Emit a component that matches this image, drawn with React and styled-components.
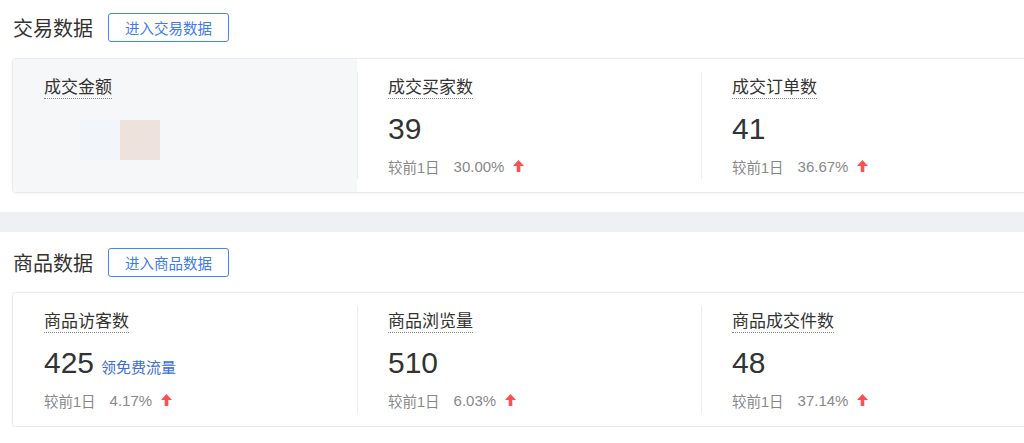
import React from "react";
import styled, { createGlobalStyle } from "styled-components";

const Global = createGlobalStyle`
  html, body { margin: 0; padding: 0; background: #fff; overflow: hidden; }
  body { font-family: "Liberation Sans", "Noto Sans CJK SC", sans-serif; color: #333; }
  * { box-sizing: border-box; }
`;

const Page = styled.div`
  width: 1024px;
  display: flex;
  flex-direction: column;
`;

const Section = styled.section`
  padding: ${(p) => p.$top}px 0 0 12px;
  display: flex;
  flex-direction: column;
  gap: ${(p) => p.$gap}px;
`;

const Header = styled.div`
  display: flex;
  align-items: center;
  gap: 15px;
  height: 29px;
`;

const Title = styled.h2`
  margin: 0;
  font-size: 20px;
  font-weight: 400;
  color: #333;
  line-height: 29px;
  padding-left: 1px;
  font-family: "Noto Sans CJK SC", sans-serif;
`;

const LinkButton = styled.button`
  height: 29px;
  padding: 0 16px;
  border: 1px solid #4a83f5;
  border-radius: 3px;
  background: #fff;
  color: #3f7af0;
  font-size: 14.5px;
  font-family: "Noto Sans CJK SC", sans-serif;
  line-height: 27px;
  cursor: pointer;
`;

const Card = styled.div`
  width: 1034px;
  display: grid;
  grid-template-columns: 344px 344px 344px;
  border: 1px solid #eaeaea;
  border-radius: 4px;
  box-shadow: 0 1px 3px rgba(0, 0, 0, 0.04);
  overflow: hidden;
`;

const Cell = styled.div`
  background: ${(p) => (p.$muted ? "#f6f7f9" : "#fff")};
  padding: 13px 0;
`;

const CellInner = styled.div`
  height: 107px;
  padding: 3px 0 0 ${(p) => (p.$divided ? 30 : 31)}px;
  border-left: ${(p) => (p.$divided ? "1px solid #ececec" : "none")};
  display: flex;
  flex-direction: column;
  align-items: flex-start;
`;

const Label = styled.span`
  display: inline-block;
  font-family: "Noto Sans CJK SC", sans-serif;
  font-size: 17px;
  line-height: 22px;
  color: #333;
  padding-bottom: 1px;
  border-bottom: 1px dotted #8a8a8a;
`;

const ValueRow = styled.div`
  margin-top: 10px;
  height: 40px;
  display: flex;
  align-items: baseline;
  gap: 7px;
`;

const Value = styled.span`
  font-family: "Liberation Sans", sans-serif;
  font-size: 30px;
  line-height: 40px;
  color: #333;
`;

const Promo = styled.a`
  font-family: "Noto Sans CJK SC", sans-serif;
  font-size: 15px;
  color: #3d6dd6;
  text-decoration: none;
`;

const Change = styled.div`
  margin-top: 7px;
  display: flex;
  align-items: center;
  height: 20px;
  color: #888;
`;

const ChangeLabel = styled.span`
  font-family: "Liberation Sans", "Noto Sans CJK SC", sans-serif;
  font-size: 14.5px;
  margin-right: 14px;
`;

const Percent = styled.span`
  font-family: "Liberation Sans", sans-serif;
  font-size: 15px;
  margin-right: 9px;
`;

const Masked = styled.div`
  margin: 21px 0 0 36px;
  display: flex;
`;

const Swatch = styled.div`
  width: 40px;
  height: 40px;
  background: ${(p) => p.$color};
`;

const UpArrow = () => (
  <svg width="11" height="12" viewBox="0 0 11 12">
    <path d="M5.5 0 L11 6 H7.3 V12 H3.7 V6 H0 Z" fill="#ff4f4f" />
  </svg>
);

const Band = styled.div`
  height: 20px;
  margin-top: 19px;
  background: #eef0f4;
`;

const Metric = ({ m, index, muted }) => (
  <Cell $muted={muted}>
    <CellInner $divided={index > 0}>
      <Label>{m.label}</Label>
      {m.masked ? (
        <Masked>
          <Swatch $color="#f2f6fa" />
          <Swatch $color="#ede3dc" />
        </Masked>
      ) : (
        <>
          <ValueRow>
            <Value>{m.value}</Value>
            {m.promo && <Promo href="#">{m.promo}</Promo>}
          </ValueRow>
          <Change>
            <ChangeLabel>较前1日</ChangeLabel>
            <Percent>{m.pct}</Percent>
            <UpArrow />
          </Change>
        </>
      )}
    </CellInner>
  </Cell>
);

const trade = [
  { label: "成交金额", masked: true },
  { label: "成交买家数", value: "39", pct: "30.00%" },
  { label: "成交订单数", value: "41", pct: "36.67%" },
];

const goods = [
  { label: "商品访客数", value: "425", pct: "4.17%", promo: "领免费流量" },
  { label: "商品浏览量", value: "510", pct: "6.03%" },
  { label: "商品成交件数", value: "48", pct: "37.14%" },
];

export default function App() {
  return (
    <Page>
      <Global />
      <Section $top={13} $gap={16}>
        <Header>
          <Title>交易数据</Title>
          <LinkButton>进入交易数据</LinkButton>
        </Header>
        <Card>
          {trade.map((m, i) => (
            <Metric key={m.label} m={m} index={i} muted={i === 0} />
          ))}
        </Card>
      </Section>
      <Band />
      <Section $top={16} $gap={15}>
        <Header>
          <Title>商品数据</Title>
          <LinkButton>进入商品数据</LinkButton>
        </Header>
        <Card>
          {goods.map((m, i) => (
            <Metric key={m.label} m={m} index={i} />
          ))}
        </Card>
      </Section>
    </Page>
  );
}
